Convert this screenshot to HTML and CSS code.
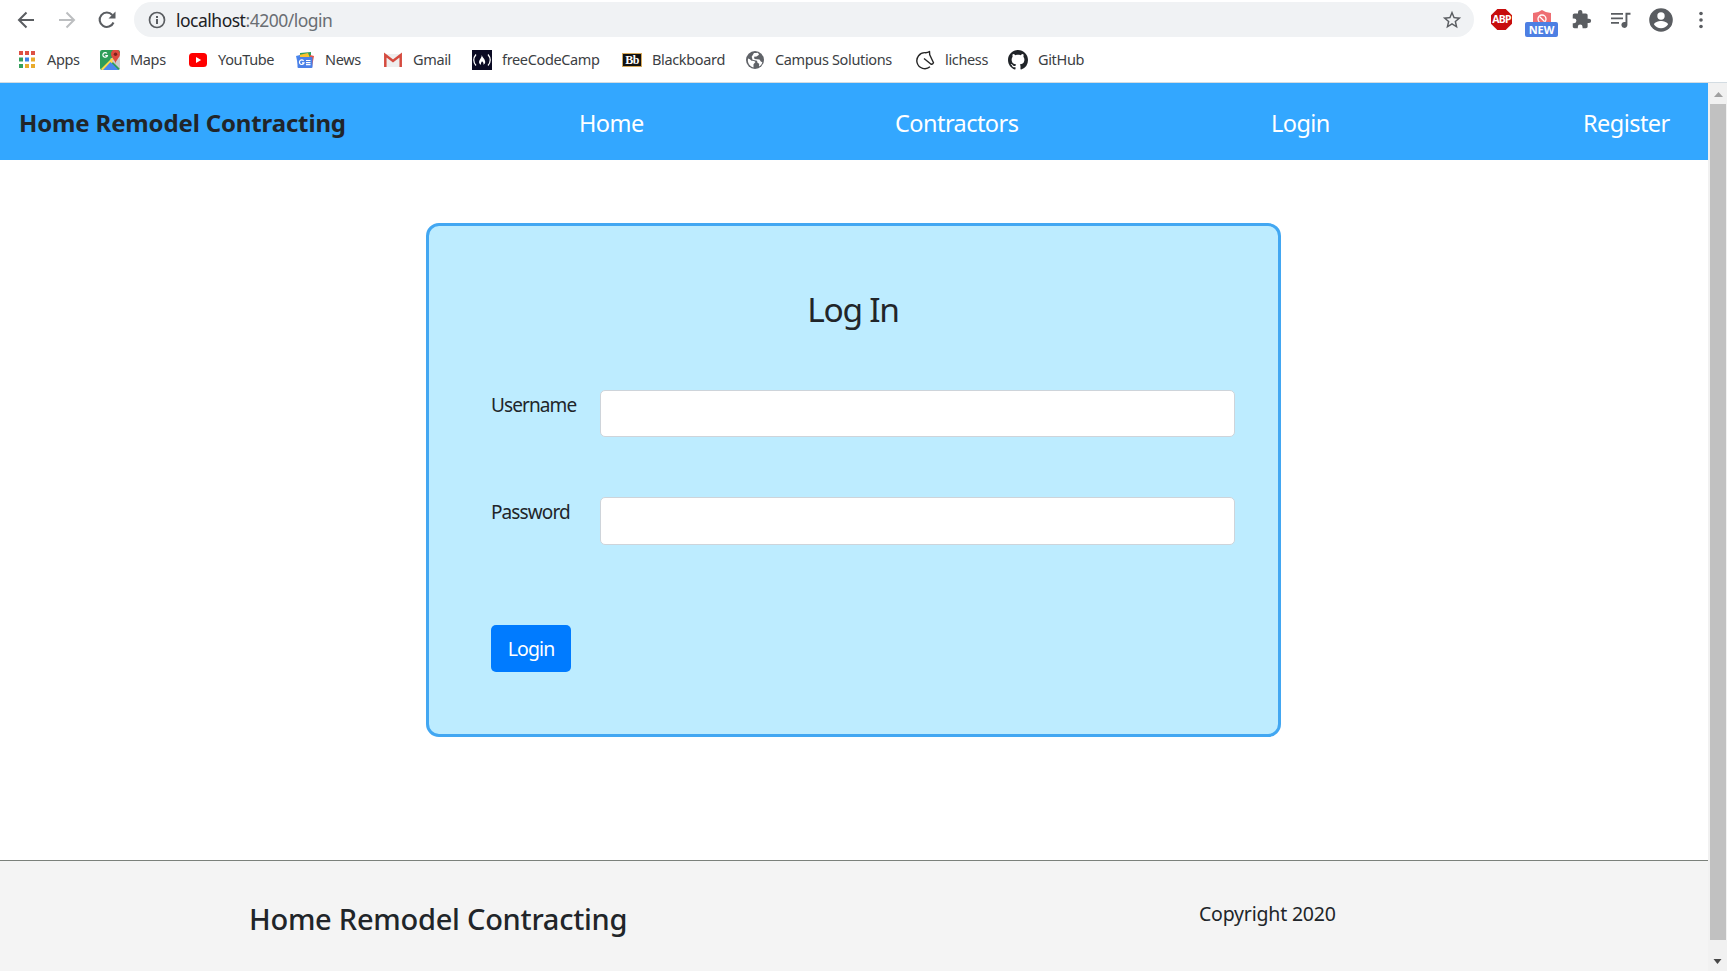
FILE: index.html
```html
<!DOCTYPE html>
<html lang="en">
<head>
<meta charset="utf-8">
<title>Home Remodel Contracting</title>
<link rel="stylesheet" href="styles.css">
</head>
<body>
<div class="toolbar">
  <svg class="back" width="18" height="18" viewBox="0 0 18 18" fill="none" stroke="#5a5d61" stroke-width="2"><path d="M17 9H2.500M9.500 1.500L2 9l7.500 7.500"/></svg>
  <svg class="forward" width="18" height="18" viewBox="0 0 18 18" fill="none" stroke="#bcbec0" stroke-width="2"><path d="M1 9h14.500M8.500 1.500L16 9l-7.500 7.500"/></svg>
  <svg class="reload" width="20" height="20" viewBox="0 0 20 20"><path d="M16.500 12.500A7.200 7.200 0 1 1 15.300 5" fill="none" stroke="#5a5d61" stroke-width="2.100"/><path d="M18.500 1.500v7h-7z" fill="#5a5d61"/></svg>
  <div class="omnibox">
    <svg width="18" height="18" viewBox="0 0 18 18"><circle cx="9" cy="9" r="7.500" fill="none" stroke="#5a5d61" stroke-width="1.700"/><path d="M8 8h2v5H8zM8 5h2v2H8z" fill="#5a5d61"/></svg>
    <span class="url"><b>localhost</b>:4200/login</span>
    <svg class="star" width="22" height="22" viewBox="0 0 24 24"><path fill="#5a5d61" d="M22 9.240l-7.190-.620L12 2 9.190 8.630 2 9.240l5.460 4.730L5.820 21 12 17.270 18.180 21l-1.630-7.030L22 9.240zM12 15.400l-3.760 2.270 1-4.280-3.320-2.880 4.380-.380L12 6.100l1.710 4.040 4.380.380-3.320 2.880 1 4.280L12 15.400z"/></svg>
  </div>
  <div class="abp"><span>ABP</span></div>
  <div class="new">
    <svg width="20" height="14" viewBox="0 0 20 14"><path d="M1 14V3q5 0 9-3 4 3 9 3v11z" fill="#ee6e73"/><circle cx="10" cy="9" r="4" fill="none" stroke="#fff" stroke-width="1.300"/><path d="M7.500 6.500l5 5" stroke="#fff" stroke-width="1.300"/></svg>
    <span class="badge">NEW</span>
  </div>
  <svg class="puzzle" width="21" height="21" viewBox="0 0 24 24"><path fill="#5a5d61" d="M20.500 11H19V7c0-1.100-.900-2-2-2h-4V3.500a2.500 2.500 0 0 0-5 0V5H4c-1.100 0-2 .900-2 2v3.800h1.500a2.700 2.700 0 0 1 0 5.400H2V20c0 1.100.900 2 2 2h3.800v-1.500a2.700 2.700 0 0 1 5.400 0V22H17c1.100 0 2-.900 2-2v-4h1.500a2.500 2.500 0 0 0 0-5z"/></svg>
  <svg class="queue" width="20" height="18" viewBox="0 0 20 18"><path d="M0 2.800h12M0 7.300h12M0 11.800h8" stroke="#5a5d61" stroke-width="1.800"/><path d="M19.500 1.800h-5v9.300a3 3 0 1 0 1.900 2.900V3.800h3.100z" fill="#5a5d61"/></svg>
  <svg class="avatar" width="24" height="24" viewBox="0 0 24 24"><circle cx="12" cy="12" r="11.800" fill="#5a5d61"/><circle cx="12" cy="8" r="3.700" fill="#fff"/><path d="M5 16.600c0-2.500 4.600-3.700 7-3.700s7 1.200 7 3.700a8.400 8.400 0 0 1-14 0z" fill="#fff"/></svg>
  <svg class="dots" width="4" height="18" viewBox="0 0 4 18" fill="#5a5d61"><circle cx="2" cy="2.500" r="1.800"/><circle cx="2" cy="9" r="1.800"/><circle cx="2" cy="15.500" r="1.800"/></svg>
</div>
<div class="bookmarks">
  <a class="bm w-apps"><svg width="20" height="20" viewBox="0 0 20 20"><path d="M2 1h4v4H2zM8 1h4v4H8zM14 1h4v4h-4z" fill="#dd5144"/><path d="M2 7.500h4v4H2z" fill="#35a05c"/><path d="M8 7.500h4v4H8z" fill="#3b83e8"/><path d="M14 7.500h4v4h-4zM8 14h4v4H8zM14 14h4v4h-4z" fill="#e9ab2c"/><path d="M2 14h4v4H2z" fill="#35a05c"/></svg><span>Apps</span></a>
  <a class="bm w-maps"><svg width="20" height="20" viewBox="0 0 20 20"><rect width="20" height="20" rx="2" fill="#2f9d58"/><path d="M20 3v15L10 9z" fill="#d5d5d5"/><path d="M1 19L12 8l3 2L5 20H2z" fill="#ffda4a"/><path d="M3 20l7.500-8 8 8z" fill="#4a87ee"/><path d="M11.500 10.500L20 19V9z" fill="#ccc"/><path d="M15.500 14c0-4-4.500-6-4.500-10a4.500 4.500 0 0 1 9 0c0 4-4.500 6-4.500 10z" fill="#dd4b3e"/><circle cx="15.500" cy="4.200" r="1.700" fill="#7c211b"/><path d="M7 3.500a2.300 2.300 0 1 0 .4 2H5.300" fill="none" stroke="#fff" stroke-width="1.200"/></svg><span>Maps</span></a>
  <a class="bm w-youtube"><svg width="20" height="20" viewBox="0 0 20 20"><rect x="1" y="3" width="18" height="14" rx="3.500" fill="#f00"/><path d="M8 7l5.200 3L8 13z" fill="#fff"/></svg><span>YouTube</span></a>
  <a class="bm w-news"><svg width="20" height="20" viewBox="0 0 20 20"><path d="M5 3l11-1v8H5z" fill="#2f9d58"/><path d="M4 5l9-2 2 5H5z" fill="#f9c22e"/><path d="M1 6l4-1v10H3z" fill="#4a87ee"/><path d="M15 5l4 1-2 11h-3z" fill="#e2574c"/><rect x="2.500" y="7" width="15" height="11" rx="1" fill="#4a80e8"/><path d="M8.600 10.800a2.300 2.300 0 1 0 .4 2H7M11 10.500h4.500M11 12.600h4.500M11 14.700h4.500" fill="none" stroke="#fff" stroke-width="1.200"/></svg><span>News</span></a>
  <a class="bm w-gmail"><svg width="20" height="20" viewBox="0 0 20 20"><path d="M2 4h16v13H2z" fill="#eee"/><path d="M2.300 17V5l7.700 6 7.700-6v12" fill="none" stroke="#d54b3f" stroke-width="2.500"/></svg><span>Gmail</span></a>
  <a class="bm w-fcc"><svg width="20" height="20" viewBox="0 0 20 20"><path d="M0 0h20v20H0z" fill="#0a0a23"/><path d="M4 4.500q-4.500 5.500 0 11M16 4.500q4.500 5.500 0 11" fill="none" stroke="#fff" stroke-width="1.200"/><path d="M9.800 5c.4 2.300 3.400 4 3.400 7 0 1.300-.8 2.300-1.900 2.800.7-1.800-.2-2.800-1.300-3.600-.4 1.100-1.500 2-.9 3.600-1.700-.7-2.400-2.200-1.900-3.800C7.800 9.200 9.800 7.800 9.800 5z" fill="#fff"/></svg><span>freeCodeCamp</span></a>
  <a class="bm w-bb"><i class="bb">Bb</i><span>Blackboard</span></a>
  <a class="bm w-campus"><svg width="20" height="20" viewBox="0 0 20 20"><circle cx="10" cy="10" r="9" fill="#606368"/><path d="M3 8.500q2 .2 3.500 2.300 2.500-.300 4 1.200l-2 2.200v3.200C4.500 16.500 2.300 13 3 8.500zM9 3q2 0 4-.2l1 2-2.500 1.700-2.500.3.500 2.200 5 .5 1.500 2.300 1.300.2c-.3 2-1.500 3.500-3.300 4.500l.2-2.700-1.700-1-.5-2-4.500-1-.8-3z" fill="#fff"/></svg><span>Campus Solutions</span></a>
  <a class="bm w-lichess"><svg width="20" height="20" viewBox="0 0 20 20" fill="none" stroke="#252525" stroke-linejoin="round" stroke-width="1.400"><path d="M15 16.800A8 8 0 1 1 10.500 2.700q2 .1 4-1.200l.2 3.300 3.800 8q-1 2-2.700 1.200L9 8.500"/></svg><span>lichess</span></a>
  <a class="bm w-github"><svg width="20" height="20" viewBox="0 0 16 16"><path fill="#202428" d="M8 0C3.580 0 0 3.580 0 8c0 3.540 2.290 6.530 5.470 7.590.4.070.55-.17.55-.38 0-.19-.01-.82-.01-1.490-2.010.37-2.530-.49-2.690-.94-.09-.23-.48-.94-.82-1.130-.28-.15-.68-.52-.01-.53.63-.01 1.080.58 1.230.82.72 1.210 1.870.87 2.330.66.07-.52.28-.87.51-1.070-1.780-.2-3.640-.89-3.640-3.950 0-.87.31-1.590.82-2.150-.08-.2-.36-1.020.08-2.120 0 0 .67-.21 2.200.82.640-.18 1.320-.27 2-.27s1.360.09 2 .27c1.530-1.040 2.200-.82 2.200-.82.440 1.100.16 1.920.08 2.120.51.560.82 1.270.82 2.150 0 3.070-1.870 3.750-3.650 3.950.29.25.54.73.54 1.480 0 1.070-.01 1.930-.01 2.200 0 .21.15.46.55.38A8.010 8.010 0 0 0 16 8c0-4.420-3.580-8-8-8z"/></svg><span>GitHub</span></a>
</div>
<div class="viewport">
  <div class="page">
    <nav class="navbar"><strong class="brand">Home Remodel Contracting</strong><a class="n-home">Home</a><a class="n-contractors">Contractors</a><a class="n-login">Login</a><a class="n-register">Register</a></nav>
    <main class="content">
      <form class="card">
        <h2>Log In</h2>
        <div class="field"><label for="u">Username</label><input id="u" type="text"></div>
        <div class="field second"><label for="p">Password</label><input id="p" type="password"></div>
        <button type="button"><span>Login</span></button>
      </form>
    </main>
    <footer class="footer"><div class="f-title">Home Remodel Contracting</div><div class="f-copy">Copyright 2020</div></footer>
  </div>
  <div class="scrollbar">
    <svg width="19" height="21" viewBox="0 0 19 21"><path d="M6 14l4.500-5 4.500 5z" fill="#a0a0a0"/></svg>
    <div class="thumb"></div>
    <svg width="19" height="31" viewBox="0 0 19 31"><path d="M5.500 19h8l-4 5z" fill="#484848"/></svg>
  </div>
</div>
</body>
</html>
```
FILE: styles.css
```css
* { box-sizing: border-box; }
body { margin: 0; width: 1727px; height: 971px; overflow: hidden; background: #fff; color: #212529; font-family: "Noto Sans", sans-serif; display: flex; flex-direction: column; }
svg { display: block; flex: none; }
span, a, label, strong { white-space: nowrap; }

.toolbar { height: 39px; flex: none; display: flex; align-items: center; padding-left: 17px; }
.forward { margin-left: 23px; }
.reload { margin-left: 21px; }
.omnibox { height: 35px; width: 1340px; margin-left: 17px; border-radius: 18px; background: #f0f2f4; display: flex; align-items: center; padding: 0 11px 0 14px; }
.url { margin-left: 10px; font-size: 17.5px; letter-spacing: -0.5px; color: #6a6e73; line-height: 30px; }
.url b { font-weight: 400; color: #202124; }
.star { margin-left: auto; }
.abp { width: 21px; height: 21px; margin-left: 17px; flex: none; background: #c70d0d; clip-path: polygon(30% 0, 70% 0, 100% 30%, 100% 70%, 70% 100%, 30% 100%, 0 70%, 0 30%); color: #fff; font-weight: 700; font-size: 10.5px; line-height: 21px; display: flex; justify-content: center; letter-spacing: -0.7px; }
.new { position: relative; width: 33px; height: 28px; margin: 9px 0 0 13px; flex: none; }
.new svg { margin: 0 auto; }
.badge { position: absolute; left: 0; top: 12px; width: 33px; height: 15px; border-radius: 2px; background: #4d7fe3; color: #fff; font-weight: 700; font-size: 11px; line-height: 15px; text-align: center; }
.puzzle { margin-left: 13px; }
.queue { margin-left: 19px; }
.avatar { margin-left: 18px; }
.dots { margin-left: 26px; }

.bookmarks { height: 44px; flex: none; border-bottom: 1px solid #d3dce2; display: flex; padding: 0 0 2px 17px; }
.bm { display: flex; align-items: center; gap: 10px; font-size: 14.5px; color: #3c4043; letter-spacing: -0.35px; flex: none; }
.bm span { line-height: 20px; margin-bottom: 2px; }
.w-apps { width: 83px; }
.w-maps { width: 88px; }
.w-youtube { width: 107px; }
.w-news { width: 88px; }
.w-gmail { width: 89px; }
.w-fcc { width: 150px; }
.w-bb { width: 123px; }
.w-campus { width: 170px; }
.w-lichess { width: 93px; }
.bb { width: 20px; height: 14px; border: 1px solid #d6a95b; background: #111; color: #fff; font: 700 12px/12px "Liberation Serif", serif; text-align: center; letter-spacing: -0.5px; }

.viewport { flex: 1; display: flex; min-height: 0; }
.page { width: 1708px; display: flex; flex-direction: column; }
.navbar { height: 77px; background: #33a7ff; display: flex; align-items: center; padding: 2px 0 0 19px; font-size: 23.5px; letter-spacing: -0.55px; color: #fff; flex: none; }
.brand { width: 560px; color: #212529; font-size: 24px; letter-spacing: -0.15px; }
.n-home { width: 316px; }
.n-contractors { width: 376px; }
.n-login { width: 312px; }
.content { flex: 1; padding: 63px 0 0 426px; }
.card { width: 855px; height: 514px; border: 3px solid #42a7f2; border-radius: 13px; background: #bdecff; padding: 57px 43px 0 62px; }
h2 { margin: 0; height: 107px; font-size: 33.5px; line-height: 52px; font-weight: 400; letter-spacing: -1.3px; text-align: center; padding-right: 20px; }
.field { display: flex; justify-content: space-between; font-size: 19px; letter-spacing: -0.9px; height: 47px; }
.field label { line-height: 30px; }
.second { margin-top: 60px; height: 48px; }
.field input { width: 635px; height: 100%; border: 1px solid #ced4da; border-radius: 5px; background: #fff; padding: 0 12px; }
button { display: block; margin-top: 80px; width: 80px; height: 47px; border: 0; border-radius: 5px; background: #007bff; color: #fff; font: 19.5px/46px "Noto Sans", sans-serif; letter-spacing: -0.9px; padding: 0; }
.footer { height: 111px; flex: none; border-top: 1px solid #7b817b; background: #f4f4f4; display: flex; padding-left: 249px; }
.f-title { width: 950px; font-size: 29px; font-weight: 500; letter-spacing: -0.25px; line-height: 40px; padding-top: 38px; }
.f-copy { font-size: 19.5px; letter-spacing: -0.2px; line-height: 28px; padding-top: 39px; }
.scrollbar { width: 19px; background: #f1f1f1; display: flex; flex-direction: column; }
.thumb { flex: 1; margin: 0 1px 0 2px; background: #c1c1c1; }
```
